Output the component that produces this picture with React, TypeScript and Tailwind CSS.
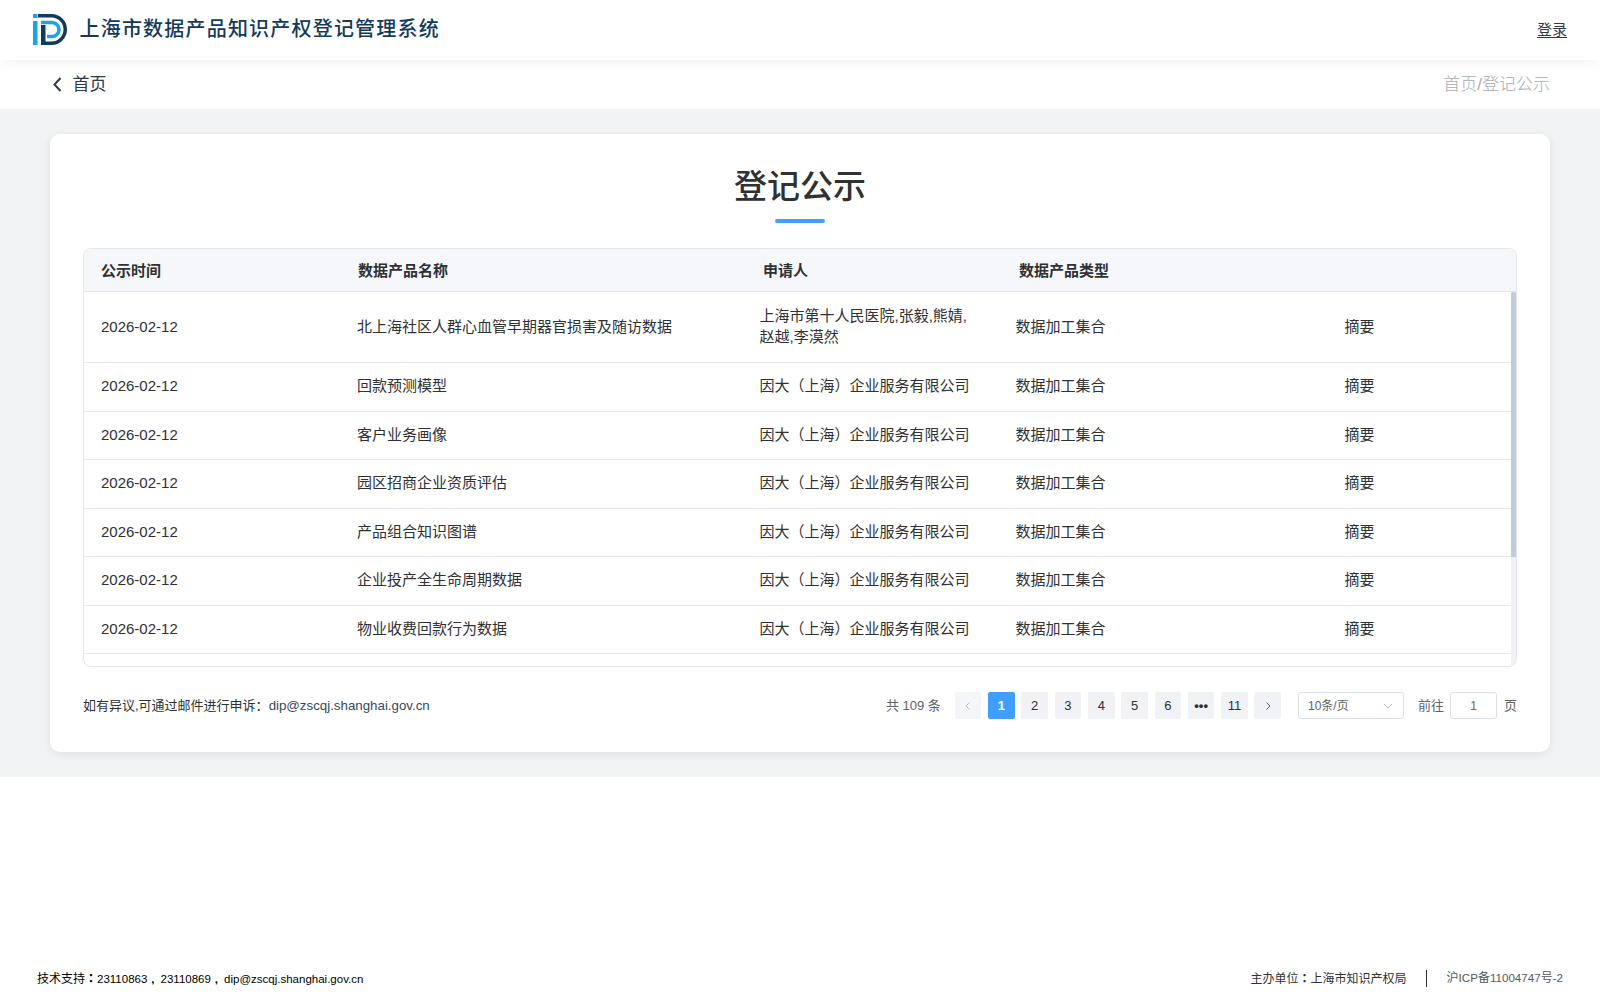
const FONT = "font-['Liberation_Sans','Noto_Sans_CJK_SC',sans-serif]";
const rows = [
  ["北上海社区人群心血管早期器官损害及随访数据", "上海市第十人民医院,张毅,熊婧,赵越,李漠然"],
  ["回款预测模型", "因大（上海）企业服务有限公司"],
  ["客户业务画像", "因大（上海）企业服务有限公司"],
  ["园区招商企业资质评估", "因大（上海）企业服务有限公司"],
  ["产品组合知识图谱", "因大（上海）企业服务有限公司"],
  ["企业投产全生命周期数据", "因大（上海）企业服务有限公司"],
  ["物业收费回款行为数据", "因大（上海）企业服务有限公司"],
];
const pages = ["1", "2", "3", "4", "5", "6", "•••", "11"];
export default function App() {
  return (
    <div className={`${FONT} flex h-screen flex-col overflow-hidden bg-white text-[#303133]`}>
      <header className="relative z-10 flex h-[60px] items-center justify-between bg-white pl-[33px] pr-[33px] shadow-[0_2px_12px_rgba(0,0,0,0.06)]">
        <div className="flex items-center gap-[12.5px]">
          <svg className="mb-[1px]" width="34" height="31" viewBox="0 0 34 31">
            <rect x="0" y="0" width="4.5" height="4" fill="#1ba3e8" />
            <rect x="0" y="7" width="4.5" height="24" fill="#1ba3e8" />
            <path d="M5 1.75H18.5A13.75 13.75 0 0 1 18.5 29.25H9" fill="none" stroke="#123a5c" strokeWidth="3.5" />
            <rect x="8" y="11" width="4.5" height="20" fill="#123a5c" />
            <path d="M8 8.5H19A7 7 0 0 1 19 22.5H14" fill="none" stroke="#1ba3e8" strokeWidth="3.5" />
          </svg>
          <h1 className="mb-[2px] text-[20px] font-medium tracking-[1.2px] text-[#143a5a]">上海市数据产品知识产权登记管理系统</h1>
        </div>
        <a className="text-[15px] text-[#303b4a] underline underline-offset-[2px]">登录</a>
      </header>
      <nav className="flex h-[49px] items-center justify-between bg-white pl-[50px] pr-[50px]">
        <div className="flex items-center gap-[7.5px] text-[17px] text-[#303b4a]">
          <svg width="15" height="17" viewBox="0 0 15 17" fill="none"><path d="M10.5 2 4.5 8.5l6 6.5" stroke="#303b4a" strokeWidth="2" /></svg>
          首页
        </div>
        <div className="text-[17px] font-light text-[#a8acb3]">首页/登记公示</div>
      </nav>
      <main className="bg-[#f2f3f5] px-[50px] py-[25px]">
        <section className="rounded-[10px] bg-white px-[33px] pb-[33px] pt-[31px] shadow-[0_2px_10px_rgba(0,0,0,0.08)]">
          <h2 className="text-center text-[33px] font-medium leading-[44px] text-[#303133]">登记公示</h2>
          <div className="mx-auto mt-[10px] h-[4px] w-[50px] rounded-full bg-[#409eff]" />
          <div className="relative mt-[25px] h-[419px] overflow-hidden rounded-[8px] border border-[#e4e7ed]">
            <div className="grid h-[43px] grid-cols-[257px_405px_256px_1fr] items-center border-b border-[#e4e7ed] bg-[#f5f7fa] pl-[17px] pt-[2px] text-[15px] font-bold text-[#303133]">
              <span>公示时间</span><span>数据产品名称</span><span>申请人</span><span>数据产品类型</span>
            </div>
            {rows.map((r, i) => (
              <div key={i} className={`grid grid-cols-[256px_402.5px_256px_329px_1fr] items-center border-b border-[#e4e7ed] pb-[2px] pl-[17px] text-[15px] leading-[21px] text-[#303133] ${i === 0 ? "h-[71px]" : "h-[48.5px]"}`}>
                <span>2026-02-12</span>
                <span>{r[0]}</span>
                <span className="w-[220px]">{r[1]}</span>
                <span>数据加工集合</span>
                <span>摘要</span>
              </div>
            ))}
            <div className="absolute bottom-0 right-0 top-[43px] w-[5px] bg-[#f0f2f5]">
              <div className="h-[265px] rounded-t-[2px] bg-[#c2ccd8]" />
            </div>
          </div>
          <div className="mt-[25px] flex h-[27px] items-center justify-between text-[13px]">
            <div className="text-[#303133]">如有异议,可通过邮件进行申诉：<span className="text-[13.3px] text-[#35495e]">dip@zscqj.shanghai.gov.cn</span></div>
            <div className="flex items-center text-[#606266]">
              <span className="mr-[14px]">共 109 条</span>
              <div className="flex gap-[6.7px]">
                <button className="flex h-[27px] w-[26.6px] items-center justify-center rounded-[2px] bg-[#f5f6f9] text-[#b8bcc5]">
                  <svg width="10" height="10" viewBox="0 0 10 10" fill="none"><path d="M6.5 1.5 3 5l3.5 3.5" stroke="currentColor" /></svg>
                </button>
                {pages.map((p, i) => (
                  <button key={p} className={`flex h-[27px] w-[26.6px] items-center justify-center rounded-[2px] text-[13px] ${i === 0 ? "bg-[#409eff] font-bold text-white" : "bg-[#f0f2f5] text-[#303133]"} ${p === "•••" ? "text-[9px] font-bold" : ""}`}>{p}</button>
                ))}
                <button className="flex h-[27px] w-[26.6px] items-center justify-center rounded-[2px] bg-[#f0f2f5] text-[#606266]">
                  <svg width="10" height="10" viewBox="0 0 10 10" fill="none"><path d="M3.5 1.5 7 5 3.5 8.5" stroke="currentColor" /></svg>
                </button>
              </div>
              <div className="ml-[17px] flex h-[27px] w-[106px] items-center justify-between rounded-[3px] border border-[#dcdfe6] pl-[9px] pr-[9px] text-[12px] text-[#606266]">
                10条/页
                <svg width="12" height="12" viewBox="0 0 12 12" fill="none"><path d="M2 4l4 4 4-4" stroke="#b8bcc5" /></svg>
              </div>
              <span className="ml-[14px]">前往</span>
              <div className="ml-[6px] flex h-[27px] w-[47px] items-center justify-center rounded-[3px] border border-[#dcdfe6] text-[12px]">1</div>
              <span className="ml-[7px]">页</span>
            </div>
          </div>
        </section>
      </main>
      <footer className="mt-auto flex h-[44px] items-center justify-between pl-[37px] pr-[37px] text-[12px]">
        <div className="pt-[2px] text-[11.5px] text-black">
          <span className="text-[12px]">技术支持<span className="font-['Noto_Sans_CJK_TC',sans-serif] font-bold">：</span></span>
          23110863<span className="ml-[4px] mr-[6px] font-bold">,</span>23110869<span className="ml-[4px] mr-[6px] font-bold">,</span>dip@zscqj.shanghai.gov.cn
        </div>
        <div className="flex items-center text-[#303133]">
          <span>主办单位<span className="font-['Noto_Sans_CJK_TC',sans-serif] font-bold">：</span>上海市知识产权局</span>
          <span className="ml-[19px] mr-[20px] h-[17px] w-px bg-[#303133]" />
          <span className="text-[11.6px] text-[#555a60]"><span className="text-[12px]">沪</span>ICP<span className="text-[12px]">备</span>11004747<span className="text-[12px]">号</span>-2</span>
        </div>
      </footer>
    </div>
  );
}
